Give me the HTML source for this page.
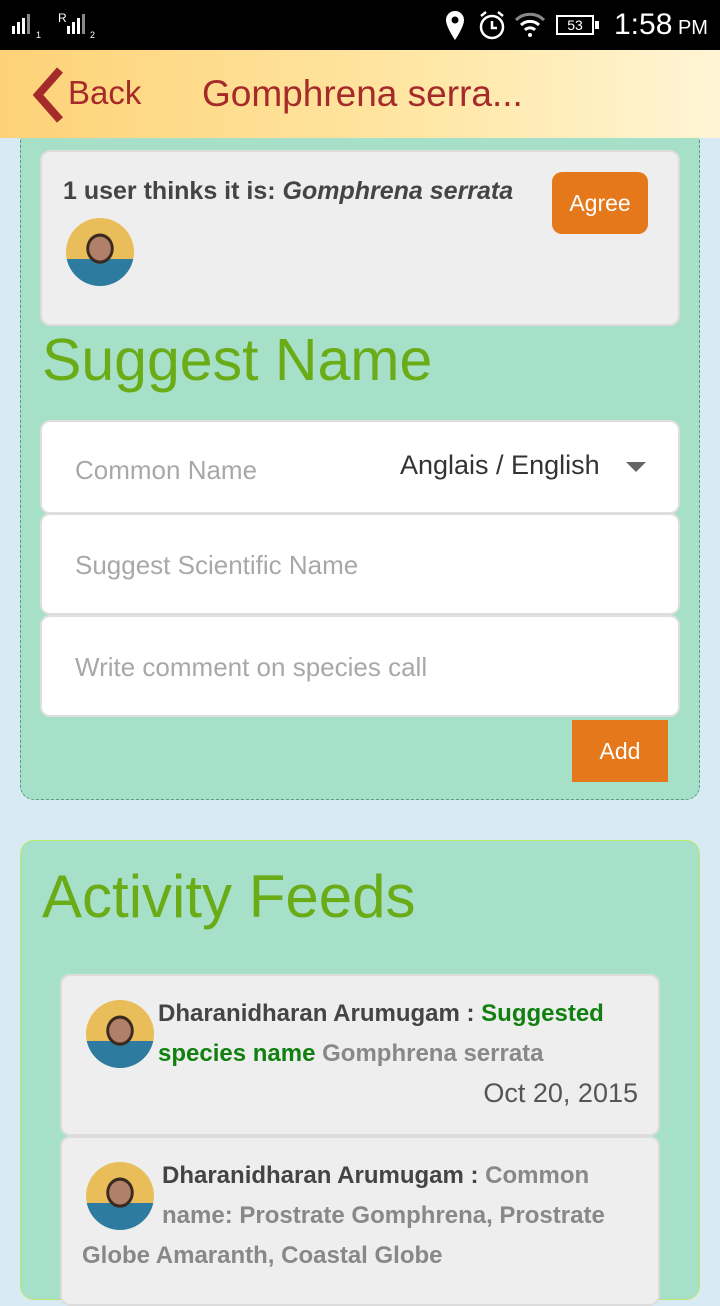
<!DOCTYPE html>
<html><head><meta charset="utf-8"><style>
*{box-sizing:border-box;margin:0;padding:0}
body{width:720px;height:1280px;overflow:hidden;background:#d8ebf4;font-family:"Liberation Sans",sans-serif;position:relative}
.abs{position:absolute}
.status{left:0;top:0;width:720px;height:50px;background:#000;color:#fff}
.hdr{left:0;top:50px;width:720px;height:88px;background:linear-gradient(90deg,#fdd277,#ffe7a6 60%,#fff5d6)}
.panel{background:#a6e0c8;border-radius:14px}
.card{background:#eeeeee;border:2px solid #dcdcdc;border-radius:10px}
.inp{background:#fff;border:2px solid #dedede;border-radius:10px;color:#a8a8a8;font-size:26px}
.btn{background:#e5781a;color:#fff;font-size:23px;text-align:center}
.av{border-radius:50%;background:radial-gradient(ellipse at 50% 45%,#b08068 0 22%,#3a2a20 23% 28%,transparent 29%),linear-gradient(180deg,#e9bd5a 0 60%,#2d7b9e 60%)}
.green{color:#6aac18}
.feed{font-size:24px;font-weight:bold;color:#444;line-height:40px}
</style></head><body>
<div class="abs status">
 <svg class="abs" style="left:10px;top:10px" width="100" height="30" viewBox="0 0 100 30"><g fill="#fff"><rect x="2" y="16" width="3" height="8"/><rect x="7" y="12" width="3" height="12"/><rect x="12" y="8" width="3" height="16"/><rect x="17" y="4" width="3" height="20" fill="#888"/><rect x="57" y="16" width="3" height="8"/><rect x="62" y="12" width="3" height="12"/><rect x="67" y="8" width="3" height="16"/><rect x="72" y="4" width="3" height="20" fill="#888"/></g><text x="26" y="28" font-size="9" fill="#fff">1</text><text x="48" y="12" font-size="12" fill="#fff">R</text><text x="80" y="28" font-size="9" fill="#fff">2</text></svg>
 <svg class="abs" style="left:444px;top:10px" width="22" height="32" viewBox="0 0 22 32"><path d="M11 1a9 9 0 0 0-9 9c0 7 9 20 9 20s9-13 9-20a9 9 0 0 0-9-9z" fill="#fff"/><circle cx="11" cy="10" r="3.5" fill="#000"/></svg>
 <svg class="abs" style="left:478px;top:10px" width="28" height="30" viewBox="0 0 28 30"><circle cx="14" cy="17" r="11" fill="none" stroke="#fff" stroke-width="2.5"/><path d="M14 11v7h5" stroke="#fff" stroke-width="2.5" fill="none"/><path d="M3 6l5-4M25 6l-5-4" stroke="#fff" stroke-width="2.5"/></svg>
 <svg class="abs" style="left:514px;top:12px" width="32" height="26" viewBox="0 0 32 26"><path d="M2 8a20 20 0 0 1 28 0" stroke="#888" stroke-width="3" fill="none"/><path d="M7 13a13 13 0 0 1 18 0M11 18a7 7 0 0 1 10 0" stroke="#fff" stroke-width="3" fill="none"/><circle cx="16" cy="23" r="2" fill="#fff"/></svg>
 <div class="abs" style="left:556px;top:15px;width:38px;height:20px;border:2px solid #fff;font-size:14px;text-align:center;line-height:16px">53</div>
 <div class="abs" style="left:595px;top:21px;width:4px;height:8px;background:#fff"></div>
 <div class="abs" style="left:614px;top:8px;font-size:30px">1:58<span style="font-size:20px"> PM</span></div>
</div>
<div class="abs panel" style="left:20px;top:120px;width:680px;height:680px;border:1px dashed #5a9a88;border-top:none"></div>
<div class="abs hdr" style="z-index:1"><svg class="abs" style="left:30px;top:16px" width="36" height="58" viewBox="0 0 36 58"><path d="M30 4L8 29l22 25" stroke="#a52a2a" stroke-width="8" fill="none"/></svg><div class="abs" style="left:68px;top:24px;font-size:33px;color:#a52a2a">Back</div><div class="abs" style="left:202px;top:23px;font-size:37px;color:#a52a2a">Gomphrena serra...</div></div>
<div class="abs card" style="left:40px;top:150px;width:640px;height:176px">
 <div class="abs" style="left:21px;top:25px;font-size:25px;font-weight:bold;color:#444">1 user thinks it is: <i>Gomphrena serrata</i></div>
 <div class="abs btn" style="left:510px;top:20px;width:96px;height:62px;border-radius:10px;line-height:62px">Agree</div>
 <div class="abs av" style="left:24px;top:66px;width:68px;height:68px"></div>
</div>
<div class="abs green" style="left:42px;top:326px;font-size:59px">Suggest Name</div>
<div class="abs inp" style="left:40px;top:420px;width:640px;height:94px"><span class="abs" style="left:33px;top:33px">Common Name</span><span class="abs" style="left:358px;top:28px;color:#333;font-size:27px">Anglais / English</span><div class="abs" style="left:584px;top:40px;border:10px solid transparent;border-top:10px solid #666;border-bottom:none;width:0;height:0"></div></div>
<div class="abs inp" style="left:40px;top:513px;width:640px;height:102px"><span class="abs" style="left:33px;top:35px">Suggest Scientific Name</span></div>
<div class="abs inp" style="left:40px;top:615px;width:640px;height:102px"><span class="abs" style="left:33px;top:35px">Write comment on species call</span></div>
<div class="abs btn" style="left:572px;top:720px;width:96px;height:62px;line-height:62px">Add</div>
<div class="abs panel" style="left:20px;top:840px;width:680px;height:460px;border:1px solid #b8e86a"></div>
<div class="abs green" style="left:42px;top:862px;font-size:60px">Activity Feeds</div>
<div class="abs card" style="left:60px;top:974px;width:600px;height:162px">
 <div class="abs av" style="left:24px;top:24px;width:68px;height:68px"></div>
 <div class="abs feed" style="left:96px;top:18px;width:490px">Dharanidharan Arumugam : <span style="color:#118011">Suggested species name</span> <span style="color:#888">Gomphrena serrata</span></div>
 <div class="abs" style="right:20px;top:102px;font-size:27px;color:#555">Oct 20, 2015</div>
</div>
<div class="abs card" style="left:60px;top:1136px;width:600px;height:170px">
 <div class="abs feed" style="left:20px;top:18px;width:540px"><div class="av" style="float:left;width:68px;height:68px;margin:6px 8px 0 4px"></div>Dharanidharan Arumugam : <span style="color:#888">Common name: Prostrate Gomphrena, Prostrate Globe Amaranth, Coastal Globe</span></div>
</div>
</body></html>
